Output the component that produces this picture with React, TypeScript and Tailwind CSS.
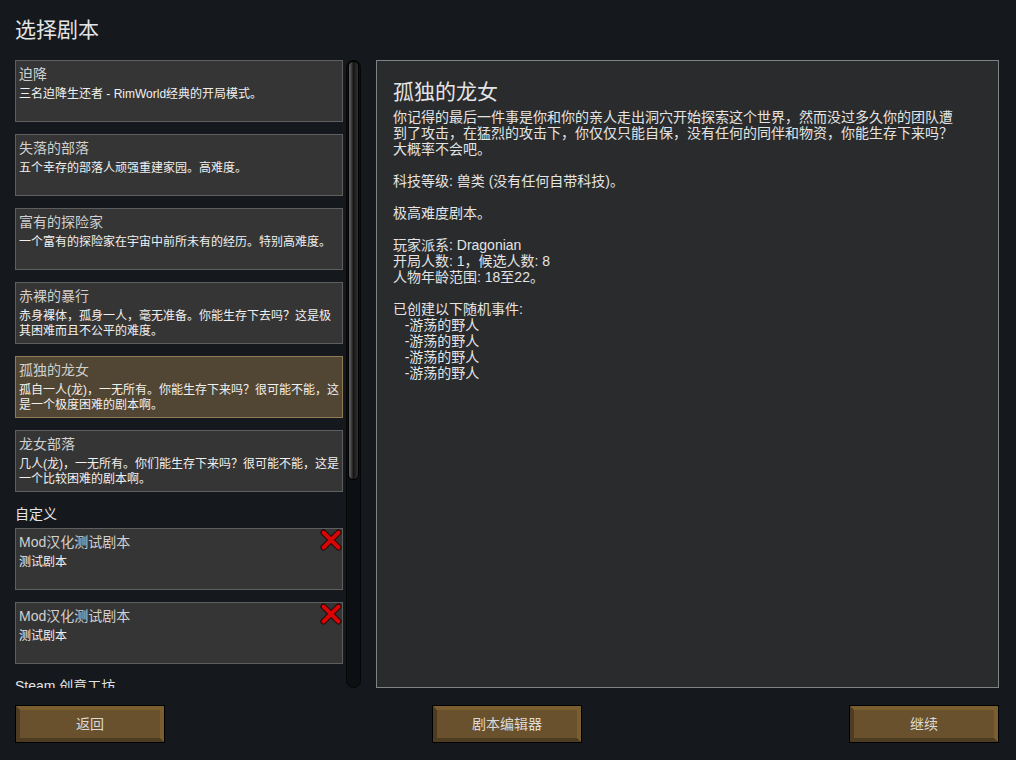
import { useState } from "react";
import type { ReactNode, UIEvent } from "react";

type Scenario = {
  id: string;
  name: string;
  summary: string;
  custom?: boolean;
};

const scenarios: Scenario[] = [
  { id: "crashlanded", name: "迫降", summary: "三名迫降生还者 - RimWorld经典的开局模式。" },
  { id: "tribe", name: "失落的部落", summary: "五个幸存的部落人顽强重建家园。高难度。" },
  { id: "explorer", name: "富有的探险家", summary: "一个富有的探险家在宇宙中前所未有的经历。特别高难度。" },
  { id: "naked", name: "赤裸的暴行", summary: "赤身裸体，孤身一人，毫无准备。你能生存下去吗？这是极其困难而且不公平的难度。" },
  { id: "dragon", name: "孤独的龙女", summary: "孤自一人(龙)，一无所有。你能生存下来吗？很可能不能，这是一个极度困难的剧本啊。" },
  { id: "dragon-tribe", name: "龙女部落", summary: "几人(龙)，一无所有。你们能生存下来吗？很可能不能，这是一个比较困难的剧本啊。" },
];

const customScenarios: Scenario[] = [
  { id: "mod-1", name: "Mod汉化测试剧本", summary: "测试剧本", custom: true },
  { id: "mod-2", name: "Mod汉化测试剧本", summary: "测试剧本", custom: true },
];

const details = `你记得的最后一件事是你和你的亲人走出洞穴开始探索这个世界，然而没过多久你的团队遭到了攻击，在猛烈的攻击下，你仅仅只能自保，没有任何的同伴和物资，你能生存下来吗？大概率不会吧。

科技等级: 兽类 (没有任何自带科技)。

极高难度剧本。

玩家派系: Dragonian
开局人数: 1，候选人数: 8
人物年龄范围: 18至22。

已创建以下随机事件:
   -游荡的野人
   -游荡的野人
   -游荡的野人
   -游荡的野人`;

function DeleteIcon() {
  return (
    <svg viewBox="0 0 22 22" className="size-[22px]" aria-hidden="true">
      <path d="M3.5 3.5 18.5 18.5M18.5 3.5 3.5 18.5" stroke="#1c0505" strokeWidth="6" strokeLinecap="round" />
      <path d="M3.5 3.5 18.5 18.5M18.5 3.5 3.5 18.5" stroke="#d90505" strokeWidth="4" strokeLinecap="round" />
    </svg>
  );
}

type CardProps = {
  scenario: Scenario;
  selected: boolean;
  onSelect: () => void;
  onDelete: () => void;
};

function ScenarioCard({ scenario, selected, onSelect, onDelete }: CardProps) {
  return (
    <li className="relative">
      <button
        type="button"
        onClick={onSelect}
        aria-pressed={selected}
        className={`flex min-h-[62px] w-full flex-col border pt-[3px] pr-px pl-[3px] text-left ${
          selected ? "border-[#8f7b56] bg-[#504633]" : "border-[#5e5e5e] bg-[#353535]"
        }`}
      >
        <span className="text-sm leading-5 text-[#d0d0d0]">{scenario.name}</span>
        <span className="mt-[3px] text-xs leading-[15px] text-[#f0f0f0]">{scenario.summary}</span>
      </button>
      {scenario.custom && (
        <button type="button" onClick={onDelete} aria-label="删除" className="absolute top-px right-px">
          <DeleteIcon />
        </button>
      )}
    </li>
  );
}

function BevelButton({ children }: { children: ReactNode }) {
  return (
    <button type="button" className="h-[38px] w-[150px] border border-black text-sm text-[#dcdad6]">
      <span className="flex h-full items-center justify-center border-4 border-t-[#7b5e30] border-r-[#7b5e30] border-b-[#4d3b22] border-l-[#4d3b22] bg-[#69512d]">
        {children}
      </span>
    </button>
  );
}

export default function App() {
  const [selected, setSelected] = useState<string>("dragon");
  const [custom, setCustom] = useState<Scenario[]>(customScenarios);
  const [scroll, setScroll] = useState<number>(0);

  const handleScroll = (e: UIEvent<HTMLDivElement>) => {
    const el = e.currentTarget;
    setScroll(el.scrollTop / Math.max(1, el.scrollHeight - el.clientHeight));
  };

  const removeCustom = (id: string) => {
    setCustom(custom.filter((s) => s.id !== id));
  };

  const renderCards = (items: Scenario[]) => (
    <ul className="flex flex-col gap-3">
      {items.map((s) => (
        <ScenarioCard
          key={s.id}
          scenario={s}
          selected={s.id === selected}
          onSelect={() => setSelected(s.id)}
          onDelete={() => removeCustom(s.id)}
        />
      ))}
    </ul>
  );

  return (
    <div className="flex h-screen flex-col bg-[#15191d] pr-[17px] pb-[17px] pl-[15px] font-['Liberation_Sans','Noto_Sans_CJK_SC',sans-serif] text-[#e4e4e4]">
      <h1 className="flex h-[60px] shrink-0 items-center text-[21px] leading-8">选择剧本</h1>

      <main className="flex min-h-0 flex-1 gap-[15px]">
        <div className="flex w-[346px] shrink-0 gap-[3px]">
          <div onScroll={handleScroll} className="min-w-0 flex-1 overflow-y-auto [scrollbar-width:none]">
            {renderCards(scenarios)}
            <h2 className="flex h-9 items-center pt-2 text-sm">自定义</h2>
            {renderCards(custom)}
            <h2 className="flex h-9 items-center pt-2 text-sm">Steam 创意工坊</h2>
          </div>
          <div className="w-[15px] rounded-full border border-[#050607] bg-[#0d1012] px-px">
            <div
              className="h-[67%] rounded-[5px] border border-black bg-linear-to-r from-[#5a5a5a] from-10% via-[#161616] via-50% to-[#333333]"
              style={{ transform: `translateY(${scroll * 49}%)` }}
            />
          </div>
        </div>

        <section className="min-w-0 flex-1 overflow-hidden border border-[#808284] bg-[#2a2b2c] py-4 pr-9 pl-4">
          <h2 className="mb-0.5 text-[21px] leading-[30px]">孤独的龙女</h2>
          <p className="text-sm leading-4 whitespace-pre-wrap">{details}</p>
        </section>
      </main>

      <footer className="mt-[17px] flex shrink-0 justify-between">
        <BevelButton>返回</BevelButton>
        <BevelButton>剧本编辑器</BevelButton>
        <BevelButton>继续</BevelButton>
      </footer>
    </div>
  );
}
